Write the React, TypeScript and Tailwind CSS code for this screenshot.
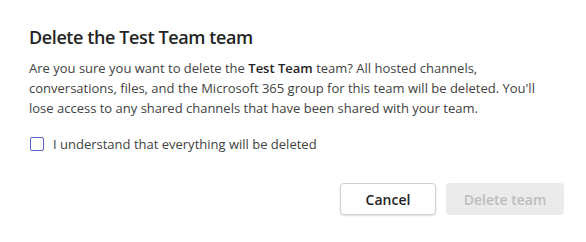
import React from "react";

export default function App() {
  return (
    <div
      className="w-[586px] h-[242px] bg-white flex flex-col pl-[29px] pr-[22px] pt-[24px] text-[#242424]"
      style={{ fontFamily: '"Open Sans", "Noto Sans", sans-serif' }}
    >
      <h1 className="text-[18px] leading-[26px] font-semibold tracking-[-0.4px] text-[#242424]">
        Delete the Test Team team
      </h1>
      <p className="mt-[8px] text-[13px] leading-[20px] text-[#424242]">
        Are you sure you want to delete the <span className="font-semibold text-[#242424]">Test Team</span> team? All hosted channels,
        <br />
        conversations, files, and the Microsoft 365 group for this team will be deleted. You'll
        <br />
        lose access to any shared channels that have been shared with your team.
      </p>
      <label className="mt-[16px] flex items-center gap-[9px] pl-[1px]">
        <span className="w-[14px] h-[14px] rounded-[2px] border border-[#5b5fc7] bg-white" />
        <span className="text-[13px] leading-[20px] text-[#424242]">I understand that everything will be deleted</span>
      </label>
      <div className="mt-[29px] flex justify-end gap-[10px]">
        <button className="w-[96px] h-[32px] rounded-[4px] border border-[#d1d1d1] bg-white text-[14px] font-semibold text-[#242424] shadow-[0_1px_2px_rgba(0,0,0,0.14)]">
          Cancel
        </button>
        <button className="w-[118px] h-[32px] rounded-[4px] bg-[#ebebeb] text-[14px] font-semibold text-[#bdbdbd]">
          Delete team
        </button>
      </div>
    </div>
  );
}
